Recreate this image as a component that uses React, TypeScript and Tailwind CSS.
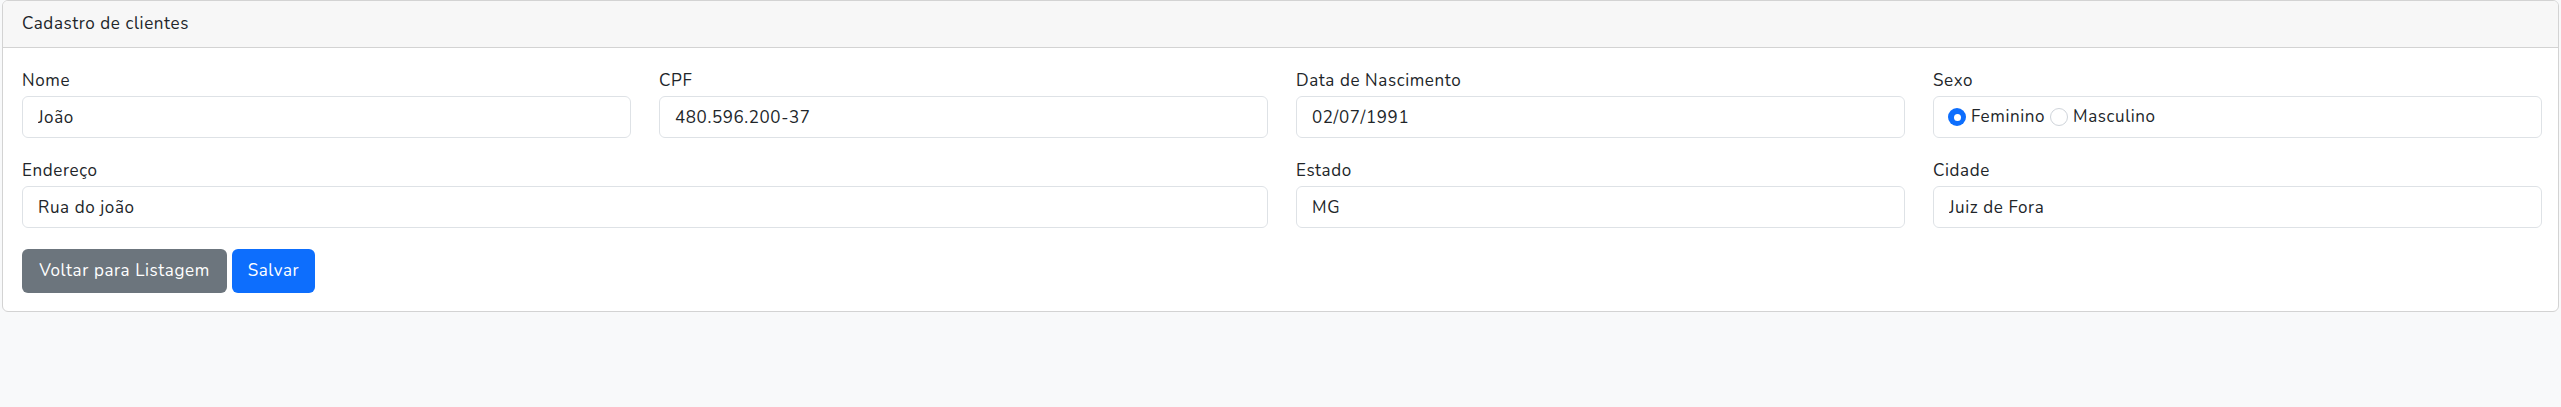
import React from 'react';

const font = { fontFamily: '"Nunito", "Open Sans", "Noto Sans", sans-serif' };

interface FieldProps {
  label: string;
  value: string;
  className?: string;
}

const Field: React.FC<FieldProps> = ({ label, value, className }) => (
  <div className={className}>
    <label className="block text-[17px] leading-[26px] mb-[2px] text-[#212529]">{label}</label>
    <input
      type="text"
      defaultValue={value}
      className="block w-full h-[42px] px-[15px] rounded-[6px] border border-[#dee2e6] bg-white text-[17px] tracking-[0.6px] text-[#212529] outline-none"
    />
  </div>
);

const Radio: React.FC<{ checked?: boolean; label: string }> = ({ checked, label }) => (
  <span className="flex items-center">
    {checked ? (
      <span className="flex items-center justify-center w-[18px] h-[18px] rounded-full bg-[#0d6efd]">
        <span className="w-[7px] h-[7px] rounded-full bg-white" />
      </span>
    ) : (
      <span className="w-[18px] h-[18px] rounded-full border border-[#cfd4da] bg-white" />
    )}
    <span className="ml-[5px] text-[17px] text-[#212529]">{label}</span>
  </span>
);

export default function App() {
  return (
    <div className="min-h-[407px] bg-[#f8f9fa] tracking-[0.6px]" style={font}>
      <div className="mx-[2px] bg-white border border-[#d3d3d3] rounded-[6px] overflow-hidden">
        <div className="h-[47px] flex items-center pl-[19px] bg-[#f7f7f7] border-b border-[#d3d3d3] text-[17px] text-[#212529]">
          Cadastro de clientes
        </div>

        <div className="pt-[20px] pl-[19px] pr-[16px] pb-[18px]">
          <div className="grid grid-cols-4 gap-x-[28px] gap-y-[20px]">
            <Field label="Nome" value="João" />
            <Field label="CPF" value="480.596.200-37" />
            <Field label="Data de Nascimento" value="02/07/1991" />
            <div>
              <label className="block text-[17px] leading-[26px] mb-[2px] text-[#212529]">Sexo</label>
              <div className="flex items-center gap-[5px] h-[42px] px-[14px] rounded-[6px] border border-[#dee2e6] bg-white">
                <Radio checked label="Feminino" />
                <Radio label="Masculino" />
              </div>
            </div>

            <Field label="Endereço" value="Rua do joão" className="col-span-2" />
            <Field label="Estado" value="MG" />
            <Field label="Cidade" value="Juiz de Fora" />
          </div>

          <div className="flex gap-[5px] mt-[21px]">
            <button className="w-[205px] h-[44px] rounded-[6px] bg-[#6c757d] text-white text-[17px]">
              Voltar para Listagem
            </button>
            <button className="w-[83px] h-[44px] rounded-[6px] bg-[#0d6efd] text-white text-[17px]">
              Salvar
            </button>
          </div>
        </div>
      </div>
    </div>
  );
}
